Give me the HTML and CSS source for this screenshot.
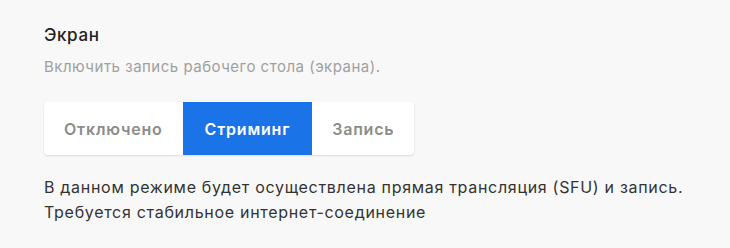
FILE: index.html
```html
<!DOCTYPE html>
<html lang="ru">
<head>
<meta charset="utf-8">
<link rel="stylesheet" href="styles.css">
</head>
<body>
<section class="setting">
  <h3 class="title">Экран</h3>
  <p class="subtitle">Включить запись рабочего стола (экрана).</p>
  <div class="segmented">
    <button class="seg">Отключено</button>
    <button class="seg active">Стриминг</button>
    <button class="seg">Запись</button>
  </div>
  <p class="desc">В данном режиме будет осуществлена прямая трансляция (SFU) и запись.<br>Требуется стабильное интернет-соединение</p>
</section>
</body>
</html>
```

FILE: styles.css
```css
html, body {
  margin: 0;
  padding: 0;
  background: #f8f8f8;
  font-family: "Inter", "Noto Sans", sans-serif;
}
.setting {
  padding: 24px 0 24px 44px;
}
.title {
  margin: 0;
  font-size: 17px;
  font-weight: 500;
  letter-spacing: 0.6px;
  color: #222;
  line-height: 22px;
}
.subtitle {
  margin: 11px 0 0;
  font-size: 15px;
  letter-spacing: 0.5px;
  color: #a0a0a0;
  line-height: 20px;
}
.segmented {
  display: inline-flex;
  margin-top: 25px;
  background: #fff;
  border-radius: 4px;
  box-shadow: 0 1px 2px rgba(0,0,0,0.12);
  overflow: hidden;
}
.seg {
  border: 0;
  background: transparent;
  font-family: inherit;
  font-size: 16px;
  font-weight: 600;
  letter-spacing: 0.8px;
  color: #8c8c8c;
  height: 53px;
  padding: 0 20px;
  cursor: pointer;
}
.seg.active {
  background: #1b73e8;
  color: #fff;
  padding: 0 22px;
}
.desc {
  margin: 20px 0 0;
  font-size: 16px;
  letter-spacing: 0.7px;
  line-height: 25px;
  color: #333;
  white-space: nowrap;
}
```
